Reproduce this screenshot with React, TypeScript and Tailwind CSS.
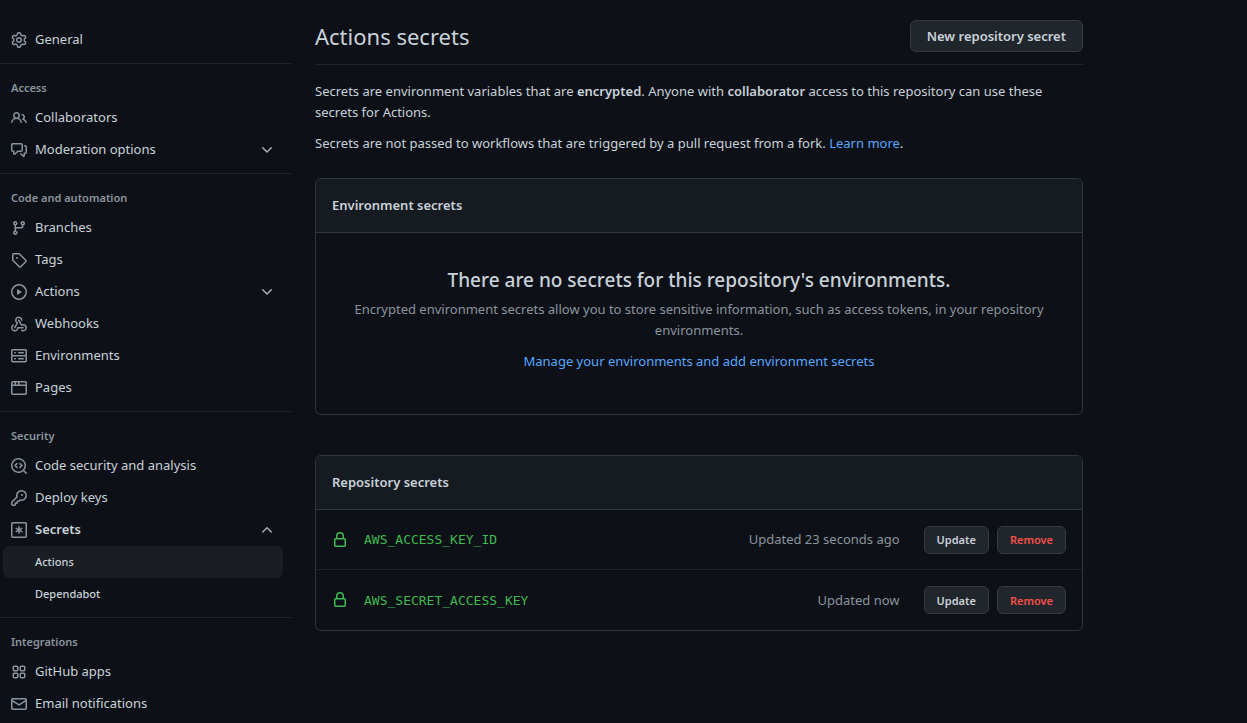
import type { ReactNode } from "react";

// 16px outline glyphs, all drawn on the same grid
const icons = {
  gear: "M8 0a8.2 8.2 0 0 1 .701.031C9.444.095 9.99.645 10.16 1.29l.288 1.107c.018.066.079.158.212.224.231.114.454.243.668.386.123.082.233.09.299.071l1.103-.303c.644-.176 1.392.021 1.82.63.27.385.506.792.704 1.218.315.675.111 1.422-.364 1.891l-.814.806c-.049.048-.098.147-.088.294.016.257.016.515 0 .772-.01.147.038.246.088.294l.814.806c.475.469.679 1.216.364 1.891a7.977 7.977 0 0 1-.704 1.217c-.428.61-1.176.807-1.82.63l-1.102-.302c-.067-.019-.177-.011-.3.071a5.909 5.909 0 0 1-.668.386c-.133.066-.194.158-.211.224l-.29 1.106c-.168.646-.715 1.196-1.458 1.26a8.006 8.006 0 0 1-1.402 0c-.743-.064-1.289-.614-1.458-1.26l-.289-1.106c-.018-.066-.079-.158-.212-.224a5.738 5.738 0 0 1-.668-.386c-.123-.082-.233-.09-.299-.071l-1.103.303c-.644.176-1.392-.021-1.82-.63a8.12 8.12 0 0 1-.704-1.218c-.315-.675-.111-1.422.363-1.891l.815-.806c.05-.048.098-.147.088-.294a6.214 6.214 0 0 1 0-.772c.01-.147-.038-.246-.088-.294l-.815-.806C.635 6.045.431 5.298.746 4.623a7.92 7.92 0 0 1 .704-1.217c.428-.61 1.176-.807 1.82-.63l1.102.302c.067.019.177.011.3-.071.214-.143.437-.272.668-.386.133-.066.194-.158.211-.224l.29-1.106C6.009.645 6.556.095 7.299.03 7.53.01 7.764 0 8 0Zm-.571 1.525c-.036.003-.108.036-.137.146l-.289 1.105c-.147.561-.549.967-.998 1.189-.173.086-.34.183-.5.29-.417.278-.97.423-1.529.27l-1.103-.303c-.109-.03-.175.016-.195.045-.22.312-.412.644-.573.99-.014.031-.021.11.059.19l.815.806c.411.406.562.957.53 1.456a4.709 4.709 0 0 0 0 .582c.032.499-.119 1.05-.53 1.456l-.815.806c-.081.08-.073.159-.059.19.162.346.353.677.573.989.02.03.085.076.195.046l1.102-.303c.56-.153 1.113-.008 1.53.27.161.107.328.204.501.29.447.222.85.629.997 1.189l.289 1.105c.029.109.101.143.137.146a6.6 6.6 0 0 0 1.142 0c.036-.003.108-.036.137-.146l.289-1.105c.147-.561.549-.967.998-1.189.173-.086.34-.183.5-.29.417-.278.97-.423 1.529-.27l1.103.303c.109.029.175-.016.195-.045.22-.313.411-.644.573-.99.014-.031.021-.11-.059-.19l-.815-.806c-.411-.406-.562-.957-.53-1.456a4.709 4.709 0 0 0 0-.582c-.032-.499.119-1.05.53-1.456l.815-.806c.081-.08.073-.159.059-.19a6.464 6.464 0 0 0-.573-.989c-.02-.03-.085-.076-.195-.046l-1.102.303c-.56.153-1.113.008-1.53-.27a4.44 4.44 0 0 0-.501-.29c-.447-.222-.85-.629-.997-1.189l-.289-1.105c-.029-.11-.101-.143-.137-.146a6.6 6.6 0 0 0-1.142 0ZM11 8a3 3 0 1 1-6 0 3 3 0 0 1 6 0ZM9.5 8a1.5 1.5 0 1 0-3.001.001A1.5 1.5 0 0 0 9.5 8Z",
  people: "M2 5.5a3.5 3.5 0 1 1 5.898 2.549 5.508 5.508 0 0 1 3.034 4.084.75.75 0 1 1-1.482.235 4 4 0 0 0-7.9 0 .75.75 0 0 1-1.482-.236A5.507 5.507 0 0 1 3.102 8.05 3.493 3.493 0 0 1 2 5.5ZM11 4a3.001 3.001 0 0 1 2.22 5.018 5.01 5.01 0 0 1 2.56 3.012.749.749 0 0 1-.885.954.752.752 0 0 1-.549-.514 3.507 3.507 0 0 0-2.522-2.372.75.75 0 0 1-.574-.73v-.352a.75.75 0 0 1 .416-.672A1.5 1.5 0 0 0 11 5.5.75.75 0 0 1 11 4Zm-5.5-.5a2 2 0 1 0-.001 3.999A2 2 0 0 0 5.5 3.5Z",
  discussion: "M1.75 1h8.5c.966 0 1.75.784 1.75 1.75v5.5A1.75 1.75 0 0 1 10.25 10H7.061l-2.574 2.573A1.458 1.458 0 0 1 2 11.543V10h-.25A1.75 1.75 0 0 1 0 8.25v-5.5C0 1.784.784 1 1.75 1ZM1.5 2.75v5.5c0 .138.112.25.25.25h1a.75.75 0 0 1 .75.75v2.19l2.72-2.72a.749.749 0 0 1 .53-.22h3.5a.25.25 0 0 0 .25-.25v-5.5a.25.25 0 0 0-.25-.25h-8.5a.25.25 0 0 0-.25.25Zm13 2a.25.25 0 0 0-.25-.25h-.5a.75.75 0 0 1 0-1.5h.5c.966 0 1.75.784 1.75 1.75v5.5A1.75 1.75 0 0 1 14.25 12H14v1.543a1.458 1.458 0 0 1-2.487 1.03L9.22 12.28a.749.749 0 0 1 .326-1.275.749.749 0 0 1 .734.215l2.22 2.22v-2.19a.75.75 0 0 1 .75-.75h1a.25.25 0 0 0 .25-.25Z",
  branch: "M9.5 3.25a2.25 2.25 0 1 1 3 2.122V6A2.5 2.5 0 0 1 10 8.5H6a1 1 0 0 0-1 1v1.128a2.251 2.251 0 1 1-1.5 0V5.372a2.25 2.25 0 1 1 1.5 0v1.836A2.493 2.493 0 0 1 6 7h4a1 1 0 0 0 1-1v-.628A2.25 2.25 0 0 1 9.5 3.25Zm-6 0a.75.75 0 1 0 1.5 0 .75.75 0 0 0-1.5 0Zm8.25-.75a.75.75 0 1 0 0 1.5.75.75 0 0 0 0-1.5ZM4.25 12a.75.75 0 1 0 0 1.5.75.75 0 0 0 0-1.5Z",
  tag: "M1 7.775V2.75C1 1.784 1.784 1 2.75 1h5.025c.464 0 .91.184 1.238.513l6.25 6.25a1.75 1.75 0 0 1 0 2.474l-5.026 5.026a1.75 1.75 0 0 1-2.474 0l-6.25-6.25A1.752 1.752 0 0 1 1 7.775Zm1.5 0c0 .066.026.13.073.177l6.25 6.25a.25.25 0 0 0 .354 0l5.025-5.025a.25.25 0 0 0 0-.354l-6.25-6.25a.25.25 0 0 0-.177-.073H2.75a.25.25 0 0 0-.25.25ZM6 5a1 1 0 1 1 0 2 1 1 0 0 1 0-2Z",
  play: "M8 0a8 8 0 1 1 0 16A8 8 0 0 1 8 0ZM1.5 8a6.5 6.5 0 1 0 13 0 6.5 6.5 0 0 0-13 0Zm4.879-2.773 4.264 2.559a.25.25 0 0 1 0 .428l-4.264 2.559A.25.25 0 0 1 6 10.559V5.442a.25.25 0 0 1 .379-.215Z",
  webhook: "M5.5 4.25a2.25 2.25 0 0 1 4.5 0 .75.75 0 0 0 1.5 0 3.75 3.75 0 1 0-6.14 2.889l-2.272 4.258a.75.75 0 0 0 1.324.706L7 7.25a.75.75 0 0 0-.309-1.015A2.25 2.25 0 0 1 5.5 4.25ZM7.364 3.607a.75.75 0 0 1 1.03.257l2.608 4.349a3.75 3.75 0 1 1-.628 6.785.75.75 0 0 1 .752-1.299 2.25 2.25 0 1 0-.033-3.88.75.75 0 0 1-1.03-.256L7.107 4.636a.75.75 0 0 1 .257-1.03ZM2.9 8.776A.75.75 0 0 1 2.625 9.8 2.25 2.25 0 1 0 6 11.75a.75.75 0 0 1 .75-.751h5.5a.75.75 0 0 1 0 1.5H7.425a3.751 3.751 0 1 1-5.55-3.998.75.75 0 0 1 1.024.274Z",
  server: "M1.75 1h12.5c.966 0 1.75.784 1.75 1.75v4c0 .372-.116.717-.314 1 .198.283.314.628.314 1v4a1.75 1.75 0 0 1-1.75 1.75H1.75A1.75 1.75 0 0 1 0 12.75v-4c0-.358.109-.707.314-1a1.739 1.739 0 0 1-.314-1v-4C0 1.784.784 1 1.75 1ZM1.5 2.75v4c0 .138.112.25.25.25h12.5a.25.25 0 0 0 .25-.25v-4a.25.25 0 0 0-.25-.25H1.75a.25.25 0 0 0-.25.25Zm.25 5.75a.25.25 0 0 0-.25.25v4c0 .138.112.25.25.25h12.5a.25.25 0 0 0 .25-.25v-4a.25.25 0 0 0-.25-.25ZM7 4.75A.75.75 0 0 1 7.75 4h4.5a.75.75 0 0 1 0 1.5h-4.5A.75.75 0 0 1 7 4.75ZM7.75 10h4.5a.75.75 0 0 1 0 1.5h-4.5a.75.75 0 0 1 0-1.5ZM3 4.75A.75.75 0 0 1 3.75 4h.5a.75.75 0 0 1 0 1.5h-.5A.75.75 0 0 1 3 4.75ZM3.75 10h.5a.75.75 0 0 1 0 1.5h-.5a.75.75 0 0 1 0-1.5Z",
  browser: "M0 2.75C0 1.784.784 1 1.75 1h12.5c.966 0 1.75.784 1.75 1.75v10.5A1.75 1.75 0 0 1 14.25 15H1.75A1.75 1.75 0 0 1 0 13.25ZM14.5 6h-13v7.25c0 .138.112.25.25.25h12.5a.25.25 0 0 0 .25-.25Zm-6-3.5v2h6V2.75a.25.25 0 0 0-.25-.25ZM5 2.5v2h2v-2Zm-3.25 0a.25.25 0 0 0-.25.25V4.5h2v-2Z",
  codescan: "M8.47 4.97a.75.75 0 0 0 0 1.06L9.94 7.5 8.47 8.97a.75.75 0 1 0 1.06 1.06l2-2a.75.75 0 0 0 0-1.06l-2-2a.75.75 0 0 0-1.06 0ZM6.53 6.03a.75.75 0 0 0-1.06-1.06l-2 2a.75.75 0 0 0 0 1.06l2 2a.75.75 0 1 0 1.06-1.06L5.06 7.5l1.47-1.47ZM12.246 13.307a7.501 7.501 0 1 1 1.06-1.06l2.474 2.473a.749.749 0 1 1-1.06 1.06ZM1.5 7.5a6.002 6.002 0 0 0 3.608 5.504 6.002 6.002 0 0 0 6.486-1.117.748.748 0 0 1 .292-.293A6 6 0 1 0 1.5 7.5Z",
  key: "M10.5 0a5.499 5.499 0 1 1-1.288 10.848l-.932.932a.749.749 0 0 1-.53.22H7v.75a.749.749 0 0 1-.22.53l-.5.5a.749.749 0 0 1-.53.22H5v.75a.749.749 0 0 1-.22.53l-.5.5a.749.749 0 0 1-.53.22h-2A1.75 1.75 0 0 1 0 14.25v-2c0-.199.079-.389.22-.53l4.932-4.932A5.5 5.5 0 0 1 10.5 0Zm-4 5.5c-.001.431.069.86.205 1.269a.75.75 0 0 1-.181.768L1.5 12.56v1.69c0 .138.112.25.25.25h1.69l.06-.06v-1.19a.75.75 0 0 1 .75-.75h1.19l.06-.06v-1.19a.75.75 0 0 1 .75-.75h1.19l1.023-1.025a.75.75 0 0 1 .768-.18A4 4 0 1 0 6.5 5.5ZM11 6a1 1 0 1 1 0-2 1 1 0 0 1 0 2Z",
  asterisk: "M1.75 0h12.5C15.216 0 16 .784 16 1.75v12.5A1.75 1.75 0 0 1 14.25 16H1.75A1.75 1.75 0 0 1 0 14.25V1.75C0 .784.784 0 1.75 0ZM1.5 1.75v12.5c0 .138.112.25.25.25h12.5a.25.25 0 0 0 .25-.25V1.75a.25.25 0 0 0-.25-.25H1.75a.25.25 0 0 0-.25.25ZM8 4a.75.75 0 0 1 .75.75V6.7l1.69-.975a.75.75 0 0 1 .75 1.3L9.5 8l1.69.976a.75.75 0 0 1-.75 1.298L8.75 9.3v1.951a.75.75 0 0 1-1.5 0V9.299l-1.69.976a.75.75 0 0 1-.75-1.3L6.5 8l-1.69-.975a.75.75 0 0 1 .75-1.3l1.69.976V4.75A.75.75 0 0 1 8 4Z",
  apps: "M1.5 3.25c0-.966.784-1.75 1.75-1.75h2.5c.966 0 1.75.784 1.75 1.75v2.5A1.75 1.75 0 0 1 5.75 7.5h-2.5A1.75 1.75 0 0 1 1.5 5.75ZM3 3.25v2.5c0 .138.112.25.25.25h2.5A.25.25 0 0 0 6 5.75v-2.5A.25.25 0 0 0 5.75 3h-2.5a.25.25 0 0 0-.25.25ZM1.5 10.25c0-.966.784-1.75 1.75-1.75h2.5c.966 0 1.75.784 1.75 1.75v2.5a1.75 1.75 0 0 1-1.75 1.75h-2.5a1.75 1.75 0 0 1-1.75-1.75Zm1.5 0v2.5c0 .138.112.25.25.25h2.5a.25.25 0 0 0 .25-.25v-2.5a.25.25 0 0 0-.25-.25h-2.5a.25.25 0 0 0-.25.25ZM8.5 3.25c0-.966.784-1.75 1.75-1.75h2.5c.966 0 1.75.784 1.75 1.75v2.5a1.75 1.75 0 0 1-1.75 1.75h-2.5A1.75 1.75 0 0 1 8.5 5.75Zm1.5 0v2.5c0 .138.112.25.25.25h2.5a.25.25 0 0 0 .25-.25v-2.5a.25.25 0 0 0-.25-.25h-2.5a.25.25 0 0 0-.25.25ZM8.5 10.25c0-.966.784-1.75 1.75-1.75h2.5c.966 0 1.75.784 1.75 1.75v2.5a1.75 1.75 0 0 1-1.75 1.75h-2.5a1.75 1.75 0 0 1-1.75-1.75Zm1.5 0v2.5c0 .138.112.25.25.25h2.5a.25.25 0 0 0 .25-.25v-2.5a.25.25 0 0 0-.25-.25h-2.5a.25.25 0 0 0-.25.25Z",
  mail: "M1.75 2h12.5c.966 0 1.75.784 1.75 1.75v8.5A1.75 1.75 0 0 1 14.25 14H1.75A1.75 1.75 0 0 1 0 12.25v-8.5C0 2.784.784 2 1.75 2ZM1.5 12.251c0 .138.112.25.25.25h12.5a.25.25 0 0 0 .25-.25V5.809L8.38 9.397a.75.75 0 0 1-.76 0L1.5 5.809v6.442Zm13-8.181v-.32a.25.25 0 0 0-.25-.25H1.75a.25.25 0 0 0-.25.25v.32L8 7.88Z",
  lock: "M4 4a4 4 0 0 1 8 0v2h.25c.966 0 1.75.784 1.75 1.75v5.5A1.75 1.75 0 0 1 12.25 15h-8.5A1.75 1.75 0 0 1 2 13.25v-5.5C2 6.784 2.784 6 3.75 6H4Zm8.25 3.5h-8.5a.25.25 0 0 0-.25.25v5.5c0 .138.112.25.25.25h8.5a.25.25 0 0 0 .25-.25v-5.5a.25.25 0 0 0-.25-.25ZM10.5 6V4a2.5 2.5 0 1 0-5 0v2Z",
  chevronDown: "M12.78 5.22a.749.749 0 0 1 0 1.06l-4.25 4.25a.749.749 0 0 1-1.06 0L3.22 6.28a.749.749 0 1 1 1.06-1.06L8 8.939l3.72-3.719a.749.749 0 0 1 1.06 0Z",
  chevronUp: "M3.22 10.53a.749.749 0 0 1 0-1.06l4.25-4.25a.749.749 0 0 1 1.06 0l4.25 4.25a.749.749 0 1 1-1.06 1.06L8 6.811 4.28 10.53a.749.749 0 0 1-1.06 0Z",
};

type IconName = keyof typeof icons;

type NavItem = {
  label: string;
  icon: IconName;
  expandable?: boolean;
  children?: { label: string; active?: boolean }[];
};

const groups: { title?: string; items: NavItem[] }[] = [
  { items: [{ label: "General", icon: "gear" }] },
  {
    title: "Access",
    items: [
      { label: "Collaborators", icon: "people" },
      { label: "Moderation options", icon: "discussion", expandable: true },
    ],
  },
  {
    title: "Code and automation",
    items: [
      { label: "Branches", icon: "branch" },
      { label: "Tags", icon: "tag" },
      { label: "Actions", icon: "play", expandable: true },
      { label: "Webhooks", icon: "webhook" },
      { label: "Environments", icon: "server" },
      { label: "Pages", icon: "browser" },
    ],
  },
  {
    title: "Security",
    items: [
      { label: "Code security and analysis", icon: "codescan" },
      { label: "Deploy keys", icon: "key" },
      {
        label: "Secrets",
        icon: "asterisk",
        expandable: true,
        children: [{ label: "Actions", active: true }, { label: "Dependabot" }],
      },
    ],
  },
  {
    title: "Integrations",
    items: [
      { label: "GitHub apps", icon: "apps" },
      { label: "Email notifications", icon: "mail" },
    ],
  },
];

const secrets = [
  { name: "AWS_ACCESS_KEY_ID", updated: "Updated 23 seconds ago" },
  { name: "AWS_SECRET_ACCESS_KEY", updated: "Updated now" },
];

function Icon({ name, className = "" }: { name: IconName; className?: string }) {
  return (
    <svg
      viewBox="0 0 16 16"
      className={`w-4 h-4 shrink-0 fill-current ${className}`}
      aria-hidden="true"
    >
      <path fillRule="evenodd" d={icons[name]} />
    </svg>
  );
}

function NavRow({ item }: { item: NavItem }) {
  const content = (
    <>
      <Icon name={item.icon} className="text-[#8b949e]" />
      <span className={`grow text-left ${item.children ? "font-semibold" : ""}`}>
        {item.label}
      </span>
      {item.expandable && (
        <Icon
          name={item.children ? "chevronUp" : "chevronDown"}
          className="text-[#a5adb6]"
        />
      )}
    </>
  );
  const row =
    "flex w-full h-8 items-center gap-2 rounded-md px-2 text-[13px] hover:bg-[#1a1e23]";

  return (
    <li>
      {item.expandable ? (
        <button type="button" aria-expanded={!!item.children} className={row}>
          {content}
        </button>
      ) : (
        <a href="#" className={row}>
          {content}
        </a>
      )}
      {item.children && (
        <ul>
          {item.children.map((child) => (
            <li key={child.label}>
              <a
                href="#"
                aria-current={child.active ? "page" : undefined}
                className={`flex h-8 items-center rounded-md pl-8 pr-2 text-[11px] font-medium ${
                  child.active ? "bg-[#1a1e23]" : ""
                }`}
              >
                {child.label}
              </a>
            </li>
          ))}
        </ul>
      )}
    </li>
  );
}

function Sidebar() {
  return (
    <nav aria-label="Repository settings" className="w-[291px] shrink-0 pt-6">
      {groups.map((group, i) => (
        <div key={i} className={i > 0 ? "mt-[7px] border-t border-[#21262d] pt-4" : ""}>
          {group.title && (
            <h3 className="pl-[11px] pb-1.5 text-[11px] leading-4 font-semibold text-[#8b949e]">
              {group.title}
            </h3>
          )}
          <ul className="pl-[3px] pr-2">
            {group.items.map((item) => (
              <NavRow key={item.label} item={item} />
            ))}
          </ul>
        </div>
      ))}
    </nav>
  );
}

function Card({ title, children }: { title: string; children: ReactNode }) {
  return (
    <section className="rounded-md border border-[#30363d] overflow-hidden">
      <h3 className="border-b border-[#30363d] bg-[#161b22] p-4 text-[13px] leading-[21px] font-semibold">
        {title}
      </h3>
      {children}
    </section>
  );
}

function SmallButton({ danger, children }: { danger?: boolean; children: ReactNode }) {
  return (
    <button
      type="button"
      className={`h-7 rounded-md border border-[#363b42] bg-[#21262d] px-3 text-[11px] font-semibold ${
        danger ? "text-[#f85149]" : ""
      }`}
    >
      {children}
    </button>
  );
}

export default function App() {
  return (
    <div className="flex gap-6 min-h-screen bg-[#0d1117] text-[#c9d1d9] font-['Noto_Sans',sans-serif]">
      <Sidebar />
      <main className="grow max-w-3xl pt-5 text-[13px] leading-[21px]">
        <header className="flex items-center justify-between border-b border-[#21262d] pb-3">
          <h2 className="text-[22px] leading-8">Actions secrets</h2>
          <button
            type="button"
            className="h-8 rounded-md border border-[#363b42] bg-[#21262d] px-4 text-[13px] font-semibold"
          >
            New repository secret
          </button>
        </header>

        <p className="pt-4 mb-2.5">
          Secrets are environment variables that are{" "}
          <strong className="font-semibold">encrypted</strong>. Anyone with{" "}
          <strong className="font-semibold">collaborator</strong> access to this
          repository can use these secrets for Actions.
        </p>
        <p className="mb-6">
          Secrets are not passed to workflows that are triggered by a pull request
          from a fork.{" "}
          <a href="#" className="text-[#58a6ff] hover:underline">
            Learn more
          </a>
          .
        </p>

        <div className="flex flex-col gap-10">
          <Card title="Environment secrets">
            <div className="p-8 text-center">
              <h4 className="mb-1 text-[19px] leading-[30px] font-medium">
                There are no secrets for this repository's environments.
              </h4>
              <p className="mb-2.5 text-[#8b949e]">
                Encrypted environment secrets allow you to store sensitive
                information, such as access tokens, in your repository environments.
              </p>
              <p className="mb-2.5">
                <a href="#" className="text-[#58a6ff] hover:underline">
                  Manage your environments and add environment secrets
                </a>
              </p>
            </div>
          </Card>

          <Card title="Repository secrets">
            <ul className="divide-y divide-[#21262d]">
              {secrets.map((secret) => (
                <li key={secret.name} className="flex h-15 items-center pr-4">
                  <Icon name="lock" className="mx-4 text-[#3fb950]" />
                  <code className="grow font-['DejaVu_Sans_Mono',monospace] text-[13px] text-[#3fb950]">
                    {secret.name}
                  </code>
                  <span className="mr-6 text-[#8b949e]">{secret.updated}</span>
                  <div className="flex gap-2">
                    <SmallButton>Update</SmallButton>
                    <SmallButton danger>Remove</SmallButton>
                  </div>
                </li>
              ))}
            </ul>
          </Card>
        </div>
      </main>
    </div>
  );
}
